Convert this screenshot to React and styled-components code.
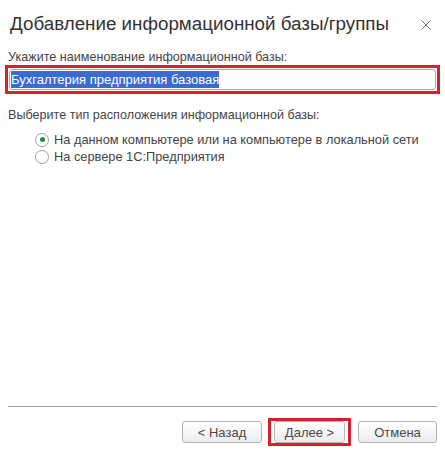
import React, { useState } from 'react';
import styled, { createGlobalStyle } from 'styled-components';

const GlobalStyle = createGlobalStyle`
    html, body {
        margin: 0;
        padding: 0;
        background: #ffffff;
    }
    body {
        font-family: "Liberation Sans", Arial, sans-serif;
    }
`;

const Window = styled.div`
    width: 445px;
    height: 455px;
    box-sizing: border-box;
    display: flex;
    flex-direction: column;
    background: #ffffff;
    color: #444444;
`;

const Header = styled.header`
    display: flex;
    align-items: center;
    justify-content: space-between;
    padding: 6px 14px 0 10px;
    height: 35px;
`;

const Title = styled.h1`
    margin: 0;
    font-size: 18.8px;
    font-weight: normal;
    color: #333333;
    white-space: nowrap;
`;

const Close = styled.svg`
    width: 10px;
    height: 10px;
    margin-top: 3px;
    cursor: pointer;
`;

const Body = styled.main`
    flex: 1;
    display: flex;
    flex-direction: column;
    padding: 9px 8px 0 8px;
`;

const Label = styled.div`
    font-size: 12.6px;
    color: #444444;
    margin: ${(props) => props.margin || '0'};
`;

const Highlight = styled.div`
    border: 3px solid #d7202b;
    padding: 1px;
    margin: 1px -3px 0 -3px;
`;

const Input = styled.div`
    height: 19px;
    border: 1px solid #a9a9a9;
    border-radius: 3px;
    display: flex;
    align-items: center;
    padding: 0 1px;
    font-size: 13px;
`;

const Selected = styled.span`
    background: #3a6ad4;
    color: #ffffff;
    padding: 1px 0;
`;

const Options = styled.div`
    display: flex;
    flex-direction: column;
    padding-left: 27px;
    margin-top: 9px;
`;

const Option = styled.label`
    display: flex;
    align-items: center;
    gap: 5px;
    font-size: 12.8px;
    color: #444444;
    height: 17px;
    cursor: pointer;
`;

const Radio = styled.span`
    width: 12px;
    height: 12px;
    border-radius: 50%;
    border: 1px solid #a0a0a0;
    background: #ffffff;
    display: flex;
    align-items: center;
    justify-content: center;
    &::after {
        content: '';
        width: 5px;
        height: 5px;
        border-radius: 50%;
        background: #2a8a4a;
        display: ${(props) => (props.checked ? 'block' : 'none')};
    }
`;

const Footer = styled.footer`
    margin: 0 8px;
    border-top: 1px solid #a0a0a0;
    display: flex;
    justify-content: flex-end;
    align-items: center;
    padding: 11px 0 9px 0;
`;

const Button = styled.button`
    font-family: "Liberation Sans", Arial, sans-serif;
    width: ${(props) => props.width || '80px'};
    height: 22px;
    border: 1px solid #b4b4b4;
    border-radius: 3px;
    background: linear-gradient(#ffffff, #ececec);
    color: #4a4a4a;
    font-size: 13px;
    padding: 0;
    cursor: pointer;
`;

const ButtonFrame = styled.div`
    border: 3px solid #d7202b;
    padding: 0 3px;
    margin: 0 7px 0 6px;
    display: flex;
`;

function App() {
    const [place, setPlace] = useState('local');

    return (
        <Window>
            <GlobalStyle />
            <Header>
                <Title>Добавление информационной базы/группы</Title>
                <Close viewBox="0 0 10 10">
                    <path d="M0.5 0.5 L9.5 9.5 M9.5 0.5 L0.5 9.5" stroke="#707070" strokeWidth="1" fill="none" />
                </Close>
            </Header>
            <Body>
                <Label>Укажите наименование информационной базы:</Label>
                <Highlight>
                    <Input>
                        <Selected>Бухгалтерия предприятия базовая</Selected>
                    </Input>
                </Highlight>
                <Label margin="14px 0 0 0">Выберите тип расположения информационной базы:</Label>
                <Options>
                    <Option onClick={() => setPlace('local')}>
                        <Radio checked={place === 'local'} />
                        На данном компьютере или на компьютере в локальной сети
                    </Option>
                    <Option onClick={() => setPlace('server')}>
                        <Radio checked={place === 'server'} />
                        На сервере 1С:Предприятия
                    </Option>
                </Options>
            </Body>
            <Footer>
                <Button>&lt; Назад</Button>
                <ButtonFrame>
                    <Button width="71px">Далее &gt;</Button>
                </ButtonFrame>
                <Button width="79px">Отмена</Button>
            </Footer>
        </Window>
    );
}

export default App;
